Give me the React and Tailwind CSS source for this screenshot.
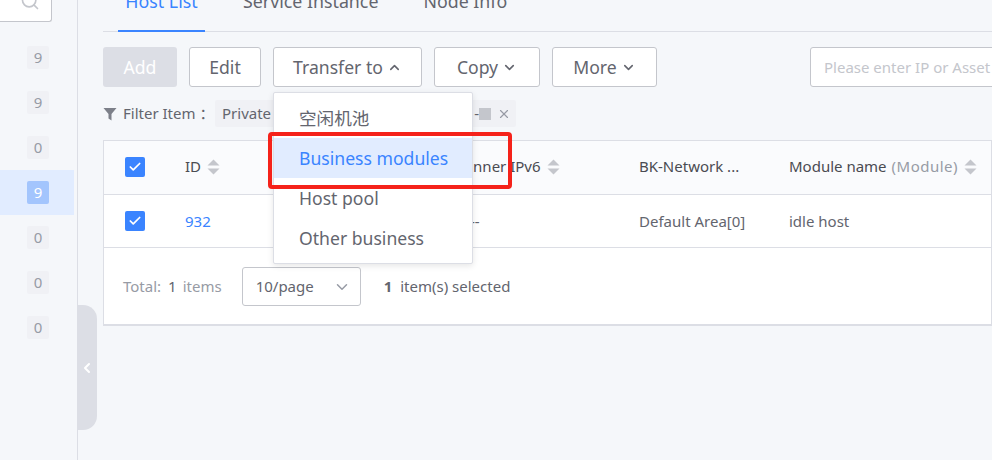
import React from "react";
import { ChevronDown, ChevronUp, ChevronLeft, Search, X, Check } from "lucide-react";

const counts = [9, 9, 0, 9, 0, 0, 0];

const SortIcon = () => (
  <svg width="13" height="16" viewBox="0 0 13 16" className="ml-[6px] shrink-0">
    <path d="M6.5 0.5 L12.5 6.5 H0.5 Z" fill="#c4c6cc" />
    <path d="M0.5 9.5 H12.5 L6.5 15.5 Z" fill="#c4c6cc" />
  </svg>
);

const CheckBox = () => (
  <span className="flex h-5 w-5 items-center justify-center rounded-[2px] bg-[#3a84ff] text-white">
    <Check size={14} strokeWidth={3} />
  </span>
);

const ToolButton = ({ children, className }) => (
  <button className={`flex h-10 shrink-0 items-center justify-center rounded-[3px] border border-[#c4c6cc] bg-white text-[17.6px] text-[#63656e] ${className}`}>
    {children}
  </button>
);

const Sidebar = () => (
  <aside className="relative w-[78px] shrink-0 border-r border-[#dcdee5] bg-[#f5f7fa]">
    <div className="flex h-[22px] w-[52px] items-start rounded-br-[3px] border-r border-b border-[#c4c6cc] bg-white pl-[20px]">
      <Search size={20} className="-mt-[9px] text-[#c4c6cc]" />
    </div>
    <div className="mt-[13px] flex w-[74px] flex-col">
      {counts.map((n, i) => (
        <div key={i} className={`flex h-[45px] items-center pl-[27px] ${i === 3 ? "bg-[#e1ecff]" : ""}`}>
          <span className={`flex h-[23px] w-[22px] items-center justify-center rounded-[2px] text-[15px] ${i === 3 ? "bg-[#a3c5fd] text-white" : "bg-[#f0f1f5] text-[#979ba5]"}`}>
            {n}
          </span>
        </div>
      ))}
    </div>
    <div className="absolute top-[305px] left-[77px] flex h-[125px] w-[20px] items-center justify-center rounded-r-[14px] bg-[#dcdee5] text-white">
      <ChevronLeft size={16} strokeWidth={3} />
    </div>
  </aside>
);

export default function App() {
  return (
    <div className="flex h-[460px] w-[992px] overflow-hidden bg-[#f5f7fa] font-['Noto_Sans','Noto_Sans_CJK_SC',sans-serif] text-[15px] text-[#63656e]">
      <Sidebar />
      <main className="relative w-[914px] shrink-0 pl-[25px]">
        <div className="flex h-[32px] items-end border-b border-[#dcdee5] pl-[15px] text-[17.8px]">
          <span className="-mb-px flex h-[50px] w-[87px] items-center justify-center border-b-2 border-[#3a84ff] pb-[9px] text-[#3a84ff]">Host List</span>
          <span className="ml-[38px] flex h-[50px] items-center pb-[9px] whitespace-nowrap">Service Instance</span>
          <span className="ml-[45px] flex h-[50px] items-center pb-[9px] whitespace-nowrap">Node Info</span>
        </div>

        <div className="mt-[15px] flex h-10 items-center">
          <button className="h-10 w-[74px] shrink-0 rounded-[3px] bg-[#dcdee5] text-[17.6px] text-white">Add</button>
          <ToolButton className="ml-3 w-[72px]">Edit</ToolButton>
          <ToolButton className="ml-3 w-[149px]">Transfer to<ChevronUp size={15} strokeWidth={2.5} className="ml-1" /></ToolButton>
          <ToolButton className="ml-3 w-[106px]">Copy<ChevronDown size={15} strokeWidth={2.5} className="ml-1" /></ToolButton>
          <ToolButton className="ml-3 w-[105px]">More<ChevronDown size={15} strokeWidth={2.5} className="ml-1" /></ToolButton>
          <div className="ml-[153px] flex h-10 w-[300px] shrink-0 items-center rounded-[3px] border border-[#c4c6cc] bg-white pl-[13px] whitespace-nowrap text-[#c4c6cc]">
            Please enter IP or Asset ID
          </div>
        </div>

        <div className="mt-[13px] flex h-[27px] items-center">
          <svg width="14" height="14" viewBox="0 0 14 14" className="shrink-0">
            <path d="M0.5 1 H13.5 L8.5 7 V13.5 L5.5 11.5 V7 Z" fill="#7d8089" />
          </svg>
          <span className="ml-[6px] w-[92px] shrink-0 whitespace-nowrap">Filter Item ：</span>
          <div className="flex h-[27px] w-[301px] items-center rounded-[2px] bg-[#f0f1f5] pl-[7px]">
            <span>Private</span>
            <span className="ml-auto">-</span>
            <span className="mr-[6px] h-3 w-3 bg-[#c4c6cc]" />
            <X size={14} className="mr-[5px] text-[#979ba5]" />
          </div>
        </div>

        <div className="mt-[13px] h-[186px] border border-b-2 border-[#dcdee5] bg-white">
          <div className="flex h-[54px] items-center border-b border-[#dcdee5] bg-[#fafbfd] pb-[2px] text-[#4a4b52]">
            <div className="w-[81px] shrink-0 pl-[21px]"><CheckBox /></div>
            <div className="flex w-[283px] shrink-0 items-center">ID<SortIcon /></div>
            <div className="flex w-[171px] shrink-0 items-center">Inner IPv6<SortIcon /></div>
            <div className="w-[150px] shrink-0">BK-Network ...</div>
            <div className="flex items-center whitespace-nowrap">
              Module name
              <span className="ml-[5px] tracking-[0.5px] text-[#979ba5]">(Module)</span>
              <span className="flex"><SortIcon /></span>
            </div>
          </div>
          <div className="flex h-[53px] items-center border-b border-[#dcdee5]">
            <div className="w-[81px] shrink-0 pl-[21px]"><CheckBox /></div>
            <div className="w-[285px] shrink-0 text-[#3a84ff]">932</div>
            <div className="w-[169px] shrink-0">--</div>
            <div className="w-[150px] shrink-0">Default Area[0]</div>
            <div>idle host</div>
          </div>
          <div className="flex h-[77px] items-center pl-[19px]">
            <span className="text-[#979ba5]">Total:</span>
            <span className="ml-[7px] text-[#63656e]">1</span>
            <span className="ml-[6px] text-[#979ba5]">items</span>
            <div className="ml-[20px] flex h-[39px] w-[119px] items-center justify-between rounded-[3px] border border-[#c4c6cc] pr-[9px] pl-[13px]">
              10/page
              <ChevronDown size={18} className="text-[#979ba5]" />
            </div>
            <span className="ml-[23px] font-bold text-[#63656e]">1</span>
            <span className="ml-2">item(s) selected</span>
          </div>
        </div>

        {/* open Transfer to menu */}
        <ul className="absolute top-[92px] left-[195px] w-[200px] rounded-[2px] border border-[#dcdee5] bg-white py-[5px] text-[17.6px] shadow-[0_2px_6px_rgba(0,0,0,0.1)]">
          <li className="flex h-10 items-center pl-[25px]">空闲机池</li>
          <li className="flex h-10 items-center bg-[#e1ecff] pl-[25px] text-[#3a84ff]">Business modules</li>
          <li className="flex h-10 items-center pl-[25px]">Host pool</li>
          <li className="flex h-10 items-center pl-[25px]">Other business</li>
        </ul>
        {/* red annotation box from the screenshot */}
        <div className="absolute top-[132px] left-[190px] h-[57px] w-[244px] rounded-[4px] border-4 border-[#f5221a]" />
      </main>
    </div>
  );
}
